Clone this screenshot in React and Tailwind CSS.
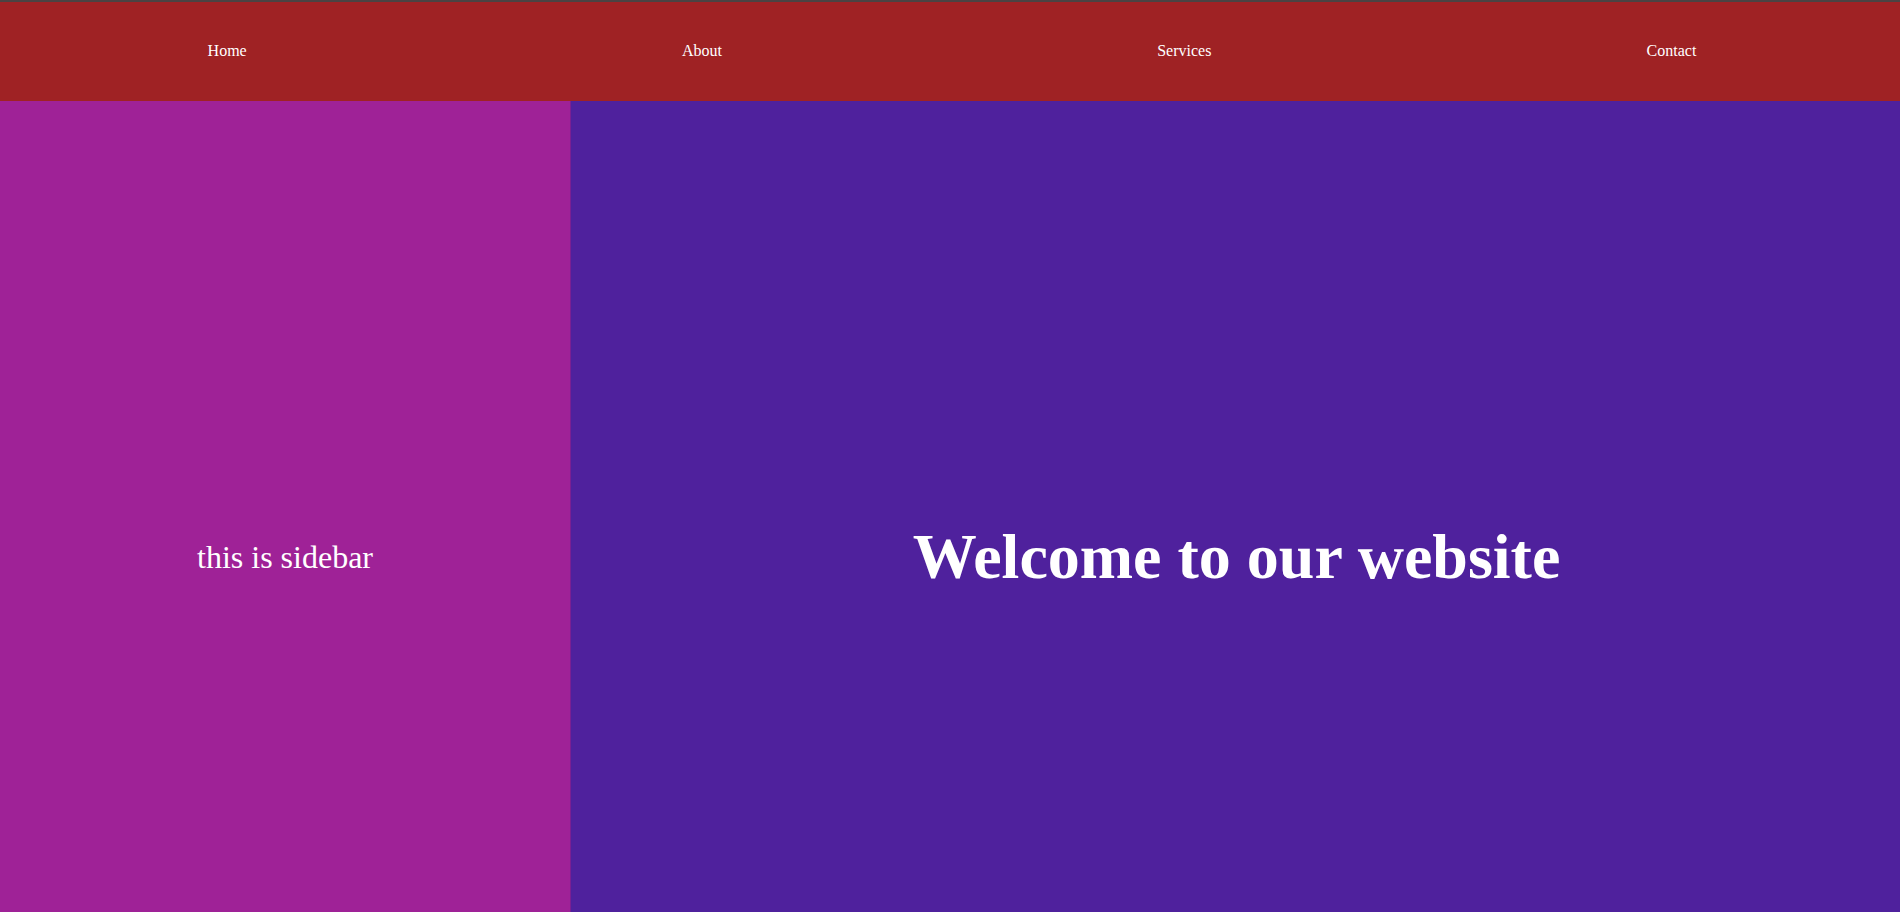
export default function App() {
  const links = ['Home', 'About', 'Services', 'Contact'];

  return (
    <div className="font-['Liberation_Serif','Times_New_Roman',serif] text-white">
      <header className="flex h-[101px] items-center border-t-2 border-[#4a4343] bg-[#9f2224]">
        <ul className="-ml-[10px] -mr-[14px] mb-[2px] flex flex-1 justify-around text-base">
          {links.map((link) => (
            <li key={link}>
              <a href="#">{link}</a>
            </li>
          ))}
        </ul>
      </header>

      <div className="flex">
        <aside className="flex h-screen w-[571px] shrink-0 items-center justify-center border-r border-[#7a1f93] bg-[#9f2297]">
          <p className="text-[32px]">this is sidebar</p>
        </aside>
        <main className="flex h-screen flex-1 items-center justify-center bg-[#4f219d]">
          <h1 className="ml-[2px] text-[64px] font-bold">Welcome to our website</h1>
        </main>
      </div>
    </div>
  );
}
